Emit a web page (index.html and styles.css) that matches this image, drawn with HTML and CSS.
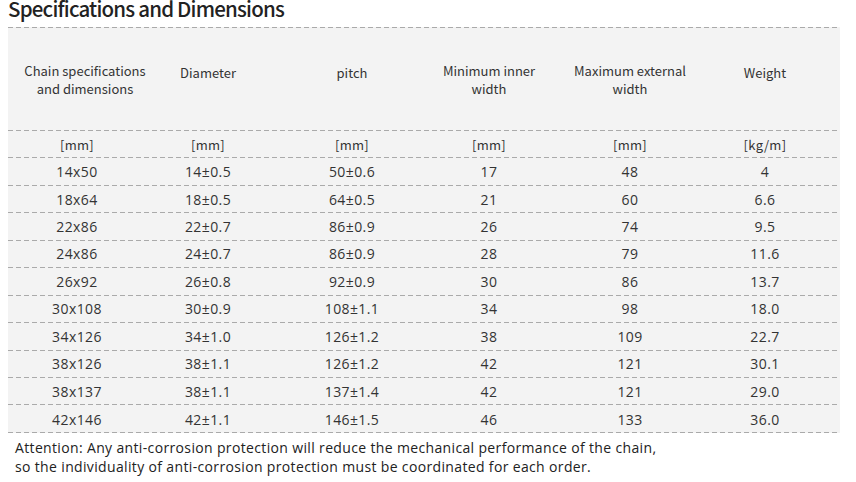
FILE: index.html
```html
<!DOCTYPE html>
<html>
<head>
<meta charset="utf-8">
<link rel="stylesheet" href="styles.css">
</head>
<body>
<h1 class="title">Specifications and Dimensions</h1>
<div class="table">
  <div class="row head">
    <div class="c first">Chain specifications<br>and dimensions</div>
    <div class="c one">Diameter</div>
    <div class="c one">pitch</div>
    <div class="c">Minimum inner<br>width</div>
    <div class="c">Maximum external<br>width</div>
    <div class="c one">Weight</div>
  </div>
  <div class="row unit"><div class="c">[mm]</div><div class="c">[mm]</div><div class="c">[mm]</div><div class="c">[mm]</div><div class="c">[mm]</div><div class="c">[kg/m]</div></div>
  <div class="row"><div class="c">14x50</div><div class="c">14±0.5</div><div class="c">50±0.6</div><div class="c">17</div><div class="c">48</div><div class="c">4</div></div>
  <div class="row"><div class="c">18x64</div><div class="c">18±0.5</div><div class="c">64±0.5</div><div class="c">21</div><div class="c">60</div><div class="c">6.6</div></div>
  <div class="row"><div class="c">22x86</div><div class="c">22±0.7</div><div class="c">86±0.9</div><div class="c">26</div><div class="c">74</div><div class="c">9.5</div></div>
  <div class="row"><div class="c">24x86</div><div class="c">24±0.7</div><div class="c">86±0.9</div><div class="c">28</div><div class="c">79</div><div class="c">11.6</div></div>
  <div class="row"><div class="c">26x92</div><div class="c">26±0.8</div><div class="c">92±0.9</div><div class="c">30</div><div class="c">86</div><div class="c">13.7</div></div>
  <div class="row"><div class="c">30x108</div><div class="c">30±0.9</div><div class="c">108±1.1</div><div class="c">34</div><div class="c">98</div><div class="c">18.0</div></div>
  <div class="row"><div class="c">34x126</div><div class="c">34±1.0</div><div class="c">126±1.2</div><div class="c">38</div><div class="c">109</div><div class="c">22.7</div></div>
  <div class="row"><div class="c">38x126</div><div class="c">38±1.1</div><div class="c">126±1.2</div><div class="c">42</div><div class="c">121</div><div class="c">30.1</div></div>
  <div class="row"><div class="c">38x137</div><div class="c">38±1.1</div><div class="c">137±1.4</div><div class="c">42</div><div class="c">121</div><div class="c">29.0</div></div>
  <div class="row last"><div class="c">42x146</div><div class="c">42±1.1</div><div class="c">146±1.5</div><div class="c">46</div><div class="c">133</div><div class="c">36.0</div></div>
</div>
<p class="note">Attention: Any anti-corrosion protection will reduce the mechanical performance of the chain,<br>so the individuality of anti-corrosion protection must be coordinated for each order.</p>
</body>
</html>
```
FILE: styles.css
```css
html, body {
  margin: 0;
  padding: 0;
  background: #fff;
}
body {
  width: 856px;
  height: 482px;
  overflow: hidden;
  color: #333;
  font-family: "Open Sans", "Noto Sans", sans-serif;
}
.title {
  margin: -7px 0 0 8px;
  height: 34px;
  font-family: "Noto Sans CJK SC", "Noto Sans", sans-serif;
  font-weight: 500;
  font-size: 20.5px;
  line-height: 30px;
  color: #222;
  letter-spacing: -0.8px;
  white-space: nowrap;
}
.table {
  margin-left: 8px;
  width: 832px;
  background: #f3f3f3;
}
.row {
  display: grid;
  grid-template-columns: 138px 124px 164px 110px 172px 98px 1fr;
  height: 27.45px;
  align-items: center;
  background-image: repeating-linear-gradient(to right, #aaa 0 5px, transparent 5px 8px);
  background-size: 100% 1px;
  background-repeat: no-repeat;
  background-position: 0 0;
  font-size: 14px;
  letter-spacing: 0.4px;
  color: #333;
}
.row.last {
  background-image:
    repeating-linear-gradient(to right, #aaa 0 5px, transparent 5px 8px),
    repeating-linear-gradient(to right, #aaa 0 5px, transparent 5px 8px);
  background-size: 100% 1px, 100% 1px;
  background-position: 0 0, 0 100%;
  height: 28.45px;
}
.c {
  text-align: center;
  padding-top: 1px;
}
.head {
  height: 103px;
  align-items: start;
  font-family: "Noto Sans CJK SC", "Noto Sans", sans-serif;
  font-size: 13px;
  line-height: 18px;
  letter-spacing: 0;
}
.head .c {
  padding-top: 35px;
}
.head .c.one {
  padding-top: 37px;
}
.head .c.first {
  padding-left: 16px;
}
.unit {
  font-family: "Noto Sans CJK SC", "Noto Sans", sans-serif;
  font-size: 13px;
  letter-spacing: 0.3px;
}
.note {
  margin: 5px 0 0 15px;
  font-size: 14px;
  line-height: 19px;
  letter-spacing: 0.35px;
  color: #222;
}
```
